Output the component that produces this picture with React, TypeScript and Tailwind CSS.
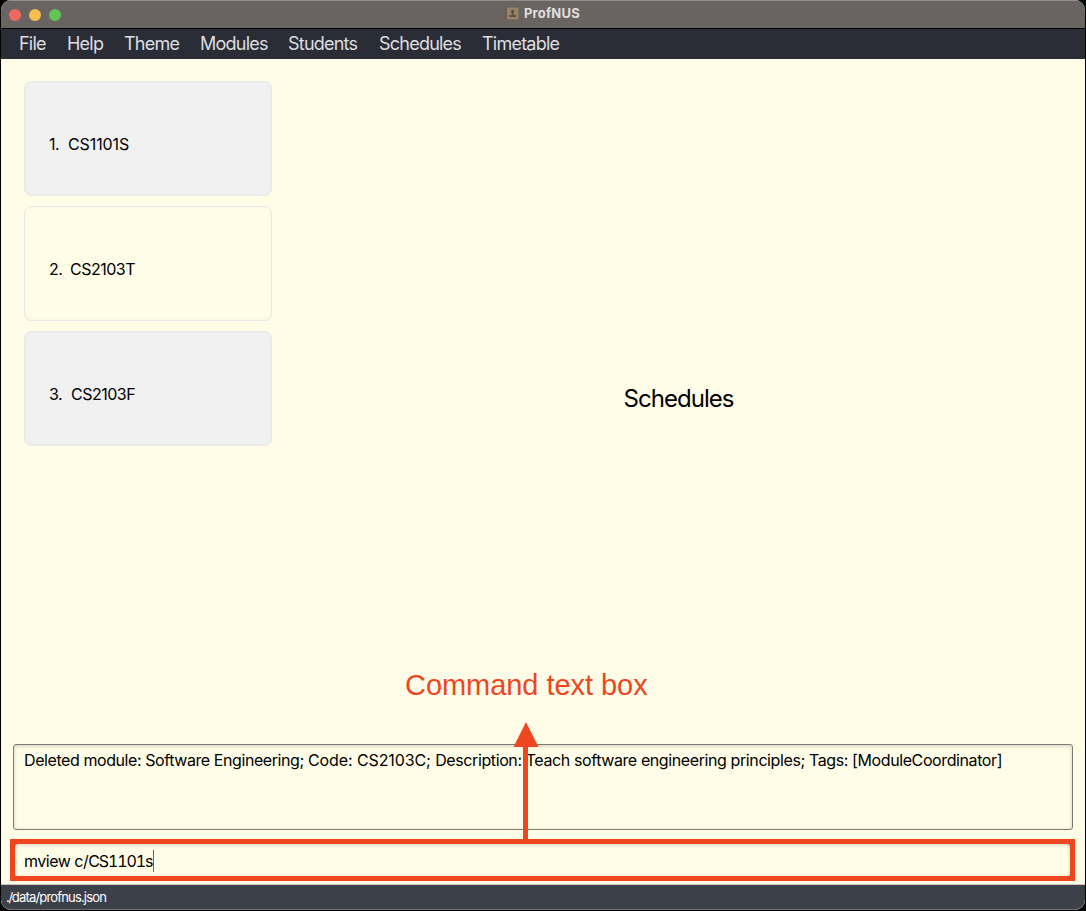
const menus = [
  { label: 'File', width: 'w-[48px]' },
  { label: 'Help', width: 'w-[57px]' },
  { label: 'Theme', width: 'w-[76px]' },
  { label: 'Modules', width: 'w-[88px]' },
  { label: 'Students', width: 'w-[91px]' },
  { label: 'Schedules', width: 'w-[103px]' },
  { label: 'Timetable', width: 'w-[90px]' },
];

const modules = [
  { code: 'CS1101S', fill: 'bg-[#f1f1f2]', gap: 'w-[19px]', tracking: 'tracking-[-0.1px]' },
  { code: 'CS2103T', fill: 'bg-[#fffde7]', gap: 'w-[21px]', tracking: 'tracking-[-0.5px]' },
  { code: 'CS2103F', fill: 'bg-[#f1f1f2]', gap: 'w-[22px]', tracking: 'tracking-[-0.5px]' },
];

function TitleBar() {
  return (
    <header className="flex h-[29px] shrink-0 items-center border-t border-b border-t-[#918e8c] border-b-black bg-[#696462] px-2">
      <div className="flex gap-2">
        <i className="size-3 rounded-full bg-[#ee6a5f]" />
        <i className="size-3 rounded-full bg-[#f5bf4f]" />
        <i className="size-3 rounded-full bg-[#61c554]" />
      </div>
      <div className="-mt-[2px] ml-[444px] flex items-center gap-[5px]">
        <svg width="14" height="13" viewBox="0 0 14 13">
          <rect width="14" height="13" rx="1" fill="#6b5b4b" />
          <rect x="2" y="0.5" width="11.5" height="12" fill="#96836a" />
          <path d="M6.3 3h2.7v3l-.4.7V8H11v2H4.5V8h2.3V6.7L6.3 6z" fill="#59503f" />
        </svg>
        <span className="-mt-px text-[13px] leading-4 font-bold tracking-[0.2px] text-[#e2dfdd]">ProfNUS</span>
      </div>
    </header>
  );
}

export default function App() {
  return (
    <div className="h-[911px] w-[1086px] overflow-hidden bg-black px-px pb-px font-['Inter',sans-serif] text-black">
      <div className="relative flex h-[910px] flex-col overflow-hidden rounded-t-[10px] rounded-b-[10px] bg-[#fffde7]">
        <TitleBar />
        <nav className="flex h-[30px] shrink-0 items-center bg-[#2a2d35] pb-[2px] pl-[18px] text-[18px] tracking-[-0.77px] text-[#dedfe0]">
          {menus.map((m) => (
            <span key={m.label} className={m.width}>{m.label}</span>
          ))}
        </nav>
        <main className="flex h-[685px] shrink-0">
          <ul className="flex w-[271px] flex-col gap-[10px] pt-[22px] pl-[23px]">
            {modules.map((m, i) => (
              <li
                key={m.code}
                className={`flex h-[115px] items-center rounded-[7px] border border-[#e9e9e5] pt-[11px] pl-[24px] text-[16px] tracking-[-0.5px] shadow-[inset_0_0_3px_rgba(0,0,0,0.05)] ${m.fill}`}
              >
                <span className={m.gap}>{i + 1}.</span>
                <span className={m.tracking}>{m.code}</span>
              </li>
            ))}
          </ul>
          <div className="flex flex-1 justify-center pt-[324px]">
            <h1 className="text-[24px] leading-8 tracking-[-0.97px]">Schedules</h1>
          </div>
        </main>
        <section className="mx-3 h-[86px] shrink-0 rounded-[3px] border border-[#7c7b74] px-[10px] pt-[3px] shadow-[inset_0_1px_4px_rgba(0,0,0,0.18)]">
          <p className="text-[16px] leading-6 tracking-[-0.42px] whitespace-nowrap">
            Deleted module: Software Engineering; <span className="tracking-[-0.1px]">Code: CS2103C; </span>
            <span className="tracking-[-0.4px]">Description: Teach software engineering principles; Tags: [ModuleCoordinator]</span>
          </p>
        </section>
        <div className="mr-[10px] ml-[9px] mt-[9px] h-[42px] shrink-0 border-[5px] border-[#ee461e] bg-[#908f85]">
          <div className="flex h-8 items-center rounded-t-[4px] rounded-b-[2px] bg-[#fffde7] pt-px pl-[9px] text-[16px] tracking-[-0.5px] shadow-[inset_0_1px_4px_rgba(0,0,0,0.16)]">
            <span className="whitespace-pre">mview c/</span>
            <span className="tracking-[-1.1px] tabular-nums">CS1101s</span>
            <i className="ml-px h-[22px] w-px bg-[#66655c]" />
          </div>
        </div>
        <footer className="mt-[3px] flex flex-1 items-center rounded-b-[10px] border-t border-b border-t-[#c9c8ba] border-b-[#696c73] bg-[#3c4048] pt-[2px] pl-[5px] text-[13px] tracking-[-1.3px] text-white">
          <span>./</span>
          <span className="tracking-[-0.83px]">data/profnus.json</span>
        </footer>
        <p className="absolute top-[665px] left-[404px] font-['Liberation_Sans',sans-serif] text-[29px] leading-10 tracking-[-0.05px] whitespace-nowrap text-[#ee461e]">
          Command text box
        </p>
        <svg className="absolute top-[722px] left-[512px]" width="26" height="120" viewBox="0 0 26 120" fill="#ee461e">
          <path d="M13 0l12.5 25H15v95h-5V25H.5z" />
        </svg>
      </div>
    </div>
  );
}
